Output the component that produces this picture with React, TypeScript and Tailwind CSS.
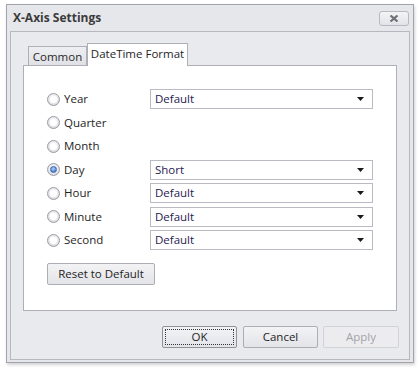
const font = { fontFamily: '"Open Sans", "Noto Sans", sans-serif' };

type Row = { label: string; value?: string; checked?: boolean };

const rows: Row[] = [
  { label: "Year", value: "Default" },
  { label: "Quarter" },
  { label: "Month" },
  { label: "Day", value: "Short", checked: true },
  { label: "Hour", value: "Default" },
  { label: "Minute", value: "Default" },
  { label: "Second", value: "Default" },
];

function Radio({ checked }: { checked?: boolean }) {
  return (
    <span className="flex size-[13px] shrink-0 items-center justify-center rounded-full border border-[#9a9ba3] bg-[radial-gradient(circle_at_50%_40%,#f4f4f6_30%,#cfd0d6_100%)]">
      {checked ? (
        <span className="size-[7px] rounded-full border border-[#3c67b8] bg-[radial-gradient(circle_at_45%_35%,#b9d2f5_0%,#4d7fd0_70%)]" />
      ) : (
        <span className="size-[7px] rounded-full bg-white" />
      )}
    </span>
  );
}

function Select({ value }: { value: string }) {
  return (
    <div className="flex h-[20px] w-[223px] items-center justify-between border border-[#b9bac2] bg-white pl-[4px] pr-[8px] text-[11.5px] text-[#1f2050]">
      <span>{value}</span>
      <svg width="7" height="4" viewBox="0 0 7 4" aria-hidden="true">
        <path d="M0 0h7L3.5 4z" fill="#1a1a1a" />
      </svg>
    </div>
  );
}

export default function App() {
  return (
    <div className="h-[372px] w-[420px] bg-white pl-[6px] pt-[4px]" style={font}>
      <div className="flex h-[359px] w-[408px] flex-col border border-[#a2a3ad] bg-[#e6e7eb] shadow-[1px_2px_3px_rgba(0,0,0,0.18)]">
        <div className="flex h-[26px] items-center justify-between pl-[6px] pr-[4px]">
          <span className="text-[12px] font-bold text-[#3b3b3b]">X-Axis Settings</span>
          <button
            type="button"
            className="flex h-[15px] w-[30px] items-center justify-center rounded-[3px] border border-[#b8b9c1] bg-[linear-gradient(#f4f4f6,#e2e3e8)]"
            aria-label="Close"
          >
            <svg width="10" height="7" viewBox="0 0 10 7" aria-hidden="true">
              <path d="M1.5 0.5l7 6M8.5 0.5l-7 6" stroke="#707178" strokeWidth="2.2" />
            </svg>
          </button>
        </div>

        <div className="mx-[3px] mb-[2px] flex flex-1 flex-col border border-[#b6b7bf] bg-[#e9eaee] pl-[12px] pt-[11px]">
          <div className="flex h-[22px] items-end pl-[5px]">
            <div className="-mb-px flex h-[20px] w-[59px] items-center justify-center border border-b-0 border-[#aeafb7] bg-[linear-gradient(#eeeff2,#dfe0e5)] pt-[1px] text-[11.5px] text-[#2a2a2a]">
              Common
            </div>
            <div className="relative z-10 -mb-px flex h-[23px] w-[101px] items-center justify-center border border-b-0 border-[#aeafb7] bg-white pb-[2px] text-[11.5px] text-[#1e1e1e]">
              DateTime Format
            </div>
          </div>

          <div className="flex h-[246px] w-[374px] flex-col border border-[#aeafb7] bg-white pl-[23px] pt-[23px]">
            <div className="flex flex-col gap-[3.5px]">
              {rows.map((row) => (
                <div key={row.label} className="flex h-[20px] items-center">
                  <div className="flex w-[103px] items-center gap-[4px] text-[11.5px] text-[#1e1e1e]">
                    <Radio checked={row.checked} />
                    <span>{row.label}</span>
                  </div>
                  {row.value ? <Select value={row.value} /> : null}
                </div>
              ))}
            </div>
            <button
              type="button"
              className="mt-[13px] flex h-[22px] w-[108px] items-center justify-center rounded-[2px] border border-[#acadb5] bg-[linear-gradient(#f3f3f5,#e3e4e8)] text-[11.5px] text-[#1e1e1e]"
            >
              Reset to Default
            </button>
          </div>

          <div className="mt-[15px] flex gap-[6px] pl-[139px]">
            <button
              type="button"
              className="flex h-[22px] w-[75px] items-center justify-center rounded-[2px] border border-[#8f9098] bg-[linear-gradient(#f2f3f6,#e2e4ea)] p-[2px] text-[11.5px] text-[#1e1e1e]"
            >
              <span className="flex h-full w-full items-center justify-center border border-dotted border-[#333]">
                OK
              </span>
            </button>
            <button
              type="button"
              className="flex h-[22px] w-[75px] items-center justify-center rounded-[2px] border border-[#acadb5] bg-[linear-gradient(#f3f3f5,#e3e4e8)] text-[11.5px] text-[#1e1e1e]"
            >
              Cancel
            </button>
            <button
              type="button"
              disabled
              className="ml-[-1px] flex h-[22px] w-[76px] items-center justify-center rounded-[2px] border border-[#d2d3d8] bg-[#ececef] text-[11.5px] text-[#a2a3aa]"
            >
              Apply
            </button>
          </div>
        </div>
      </div>
    </div>
  );
}
